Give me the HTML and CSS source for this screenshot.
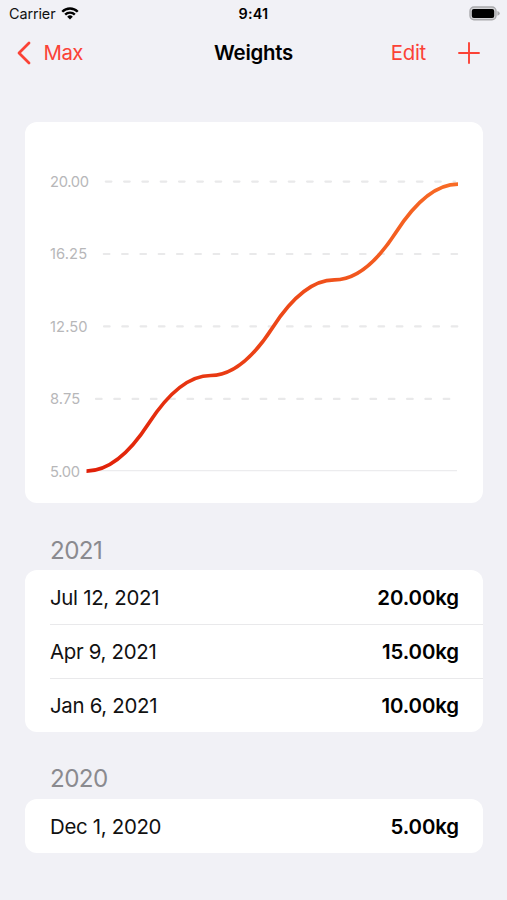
FILE: index.html
```html
<!DOCTYPE html>
<html lang="en">
<head>
    <meta charset="UTF-8">
    <meta name="viewport" content="width=device-width, initial-scale=1.0">
    <title>Weights</title>
    <link rel="stylesheet" href="styles.css">
</head>
<body>
    <div class="status-bar">
        <div class="carrier">
            <span>Carrier</span>
            <svg class="wifi" viewBox="0 0 18 14" width="18" height="14">
                <path d="M0.4 4.9 A12.2 12.2 0 0 1 17.6 4.9 L15.9 6.6 A9.8 9.8 0 0 0 2.1 6.6 Z"/>
                <path d="M3.3 7.8 A8.1 8.1 0 0 1 14.7 7.8 L13 9.5 A5.7 5.7 0 0 0 5 9.5 Z"/>
                <path d="M6.2 10.7 A4 4 0 0 1 11.8 10.7 L9 13.5 Z"/>
            </svg>
        </div>
        <div class="time">9:41</div>
        <svg class="battery" viewBox="0 0 31 15" width="31" height="15">
            <rect x="1" y="1" width="26" height="12.8" rx="4" fill="#d4d4d7" stroke="#a9a9ac" stroke-width="1.4"/>
            <rect x="2.8" y="2.9" width="22.4" height="9" rx="2" fill="#000"/>
            <path d="M28.4 5 Q30.8 6 30.8 7.4 Q30.8 8.8 28.4 9.8 Z" fill="#a9a9ac"/>
        </svg>
    </div>

    <nav class="nav-bar">
        <a class="back">
            <svg class="chevron" viewBox="0 0 16 24" width="16" height="24">
                <path d="M13 2 L3 12 L13 22"/>
            </svg>
            <span>Max</span>
        </a>
        <h1 class="title">Weights</h1>
        <div class="actions">
            <a class="edit">Edit</a>
            <svg class="plus" viewBox="0 0 22 22" width="22" height="22">
                <path d="M11 1 V21 M1 11 H21"/>
            </svg>
        </div>
    </nav>

    <main class="content">
        <section class="card">
            <svg class="chart" viewBox="0 0 458 381" width="458" height="381">
                <defs>
                    <linearGradient id="lineGradient" gradientUnits="userSpaceOnUse" x1="62" y1="0" x2="433" y2="0">
                        <stop offset="0" stop-color="#e01f08"/>
                        <stop offset="1" stop-color="#f86c26"/>
                    </linearGradient>
                </defs>
                <g class="labels">
                    <text x="25" y="65">20.00</text>
                    <text x="25" y="137.4" class="wide">16.25</text>
                    <text x="25" y="209.8" class="wide">12.50</text>
                    <text x="25" y="282.2" class="wide">8.75</text>
                    <text x="25" y="354.6">5.00</text>
                </g>
                <g class="grid">
                    <path d="M80.8 59.6 H430"/>
                    <path d="M78.8 132 H433"/>
                    <path d="M79 204.4 H433"/>
                    <path d="M71 276.9 H433"/>
                </g>
                <path class="baseline" d="M62 348.7 H432"/>
                <path class="line" d="M61.5 349.1 Q92.9 349.1 123.8 301.3 Q154.8 253.5 185.7 253.5 Q216.6 253.5 247.5 205.7 Q278.4 157.9 309.3 157.9 Q340.3 157.9 371.2 110.1 Q402.1 62.2 433 62.2"/>
            </svg>
        </section>

        <h2 class="year">2021</h2>
        <ul class="list">
            <li class="row"><span>Jul 12, 2021</span><span class="weight">20.00kg</span></li>
            <li class="row"><span>Apr 9, 2021</span><span class="weight">15.00kg</span></li>
            <li class="row"><span>Jan 6, 2021</span><span class="weight">10.00kg</span></li>
        </ul>

        <h2 class="year">2020</h2>
        <ul class="list">
            <li class="row"><span>Dec 1, 2020</span><span class="weight">5.00kg</span></li>
        </ul>
    </main>
</body>
</html>
```
FILE: styles.css
```css
* {
    box-sizing: border-box;
    margin: 0;
    padding: 0;
}

body {
    background: #f1f1f6;
    color: #111;
    font-family: Inter, "Liberation Sans", sans-serif;
    font-size: 20.4px;
    height: 900px;
    overflow: hidden;
}

.status-bar {
    display: grid;
    grid-template-columns: 1fr auto 1fr;
    align-items: center;
    height: 27px;
    padding: 0 7px;
    font-size: 14.4px;
}

.carrier {
    display: flex;
    align-items: center;
    gap: 6px;
    padding-left: 2px;
    letter-spacing: -0.1px;
}

.wifi {
    margin-top: -2px;
}

.time {
    color: #000;
    font-weight: 600;
    letter-spacing: 0.2px;
}

.battery {
    justify-self: end;
}

.nav-bar {
    display: grid;
    grid-template-columns: 1fr auto 1fr;
    align-items: center;
    height: 51px;
    padding: 0 16px;
    color: #fb4236;
}

.back {
    display: flex;
    align-items: center;
    gap: 11.5px;
    letter-spacing: -0.5px;
}

.chevron {
    fill: none;
    stroke: #fb4236;
    stroke-width: 2.8;
    stroke-linecap: round;
    stroke-linejoin: round;
}

.title {
    color: #000;
    font-size: 20.4px;
    font-weight: 600;
    letter-spacing: -0.25px;
}

.actions {
    display: flex;
    justify-content: flex-end;
    align-items: center;
    gap: 32px;
    padding-right: 11px;
}

.edit {
    letter-spacing: -0.3px;
}

.plus {
    stroke: #fb4236;
    stroke-width: 1.9;
    stroke-linecap: round;
}

.content {
    padding: 44px 24px 0 25px;
}

.card {
    height: 381px;
    background: #fff;
    border-radius: 12px;
}

.chart {
    display: block;
}

.labels {
    fill: #b7b7b9;
    font-size: 14.7px;
    letter-spacing: -0.3px;
}

.labels .wide {
    letter-spacing: 0.1px;
}

.grid {
    stroke: #e9e9ea;
    stroke-width: 2.2;
    stroke-linecap: round;
    stroke-dasharray: 5.6 12.7;
}

.baseline {
    stroke: #ececee;
    stroke-width: 1.2;
}

.line {
    fill: none;
    stroke: url(#lineGradient);
    stroke-width: 3.7;
}

.year {
    height: 67.4px;
    padding: 32.6px 0 0 25px;
    color: #8a8a8f;
    font-size: 24.2px;
    font-weight: 400;
    line-height: 30px;
    letter-spacing: -0.6px;
}

.list {
    background: #fff;
    border-radius: 12px;
    list-style: none;
}

.row {
    display: flex;
    justify-content: space-between;
    align-items: center;
    height: 53.8px;
    margin-left: 25px;
    padding: 0.6px 24px 0 0;
    letter-spacing: -0.3px;
}

.row + .row {
    border-top: 1px solid #e9e9eb;
}

.weight {
    color: #000;
    font-weight: 600;
    letter-spacing: -0.1px;
}
```
